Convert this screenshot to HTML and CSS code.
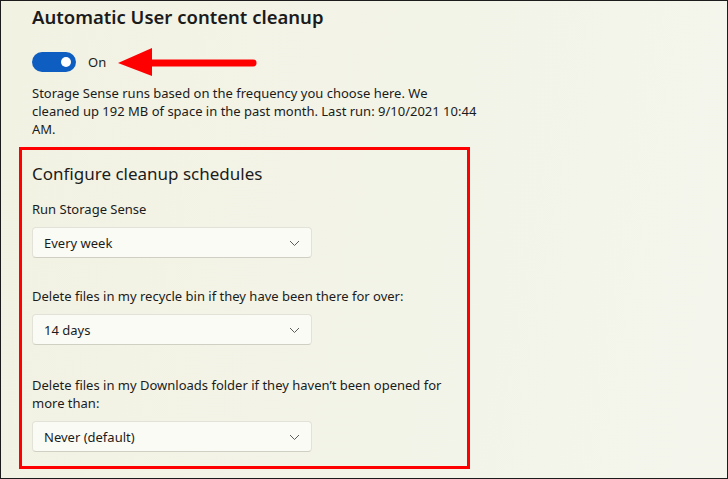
FILE: index.html
```html
<!DOCTYPE html>
<html lang="en">
<head>
<meta charset="utf-8">
<title>Storage Sense</title>
<link rel="stylesheet" href="styles.css">
</head>
<body>
<div class="frame">
  <div class="top">
    <h1 class="title">Automatic User content cleanup</h1>
    <div class="toggle-row">
      <span class="toggle"><span class="knob"></span></span>
      <span class="toggle-label">On</span>
      <svg class="arrow" width="150" height="36" viewBox="0 0 150 36">
        <line x1="36" y1="19" x2="139" y2="19" stroke="#ff0000" stroke-width="7" stroke-linecap="round"/>
        <polygon points="4,19 38,4 38,32" fill="#ff0000"/>
      </svg>
    </div>
    <p class="desc">Storage Sense runs based on the frequency you choose here. We cleaned up 192 MB of space in the past month. Last run: 9/10/2021 10:44 AM.</p>
  </div>
  <div class="box">
    <h2 class="subtitle">Configure cleanup schedules</h2>
    <div class="field first">
      <div class="label">Run Storage Sense</div>
      <div class="select"><span>Every week</span><svg class="chev" width="11" height="7" viewBox="0 0 11 7"><path d="M1 1 L5.5 5.5 L10 1" fill="none" stroke="#5c5c5c" stroke-width="1"/></svg></div>
    </div>
    <div class="field">
      <div class="label">Delete files in my recycle bin if they have been there for over:</div>
      <div class="select"><span>14 days</span><svg class="chev" width="11" height="7" viewBox="0 0 11 7"><path d="M1 1 L5.5 5.5 L10 1" fill="none" stroke="#5c5c5c" stroke-width="1"/></svg></div>
    </div>
    <div class="field last">
      <div class="label">Delete files in my Downloads folder if they haven’t been opened for more than:</div>
      <div class="select"><span>Never (default)</span><svg class="chev" width="11" height="7" viewBox="0 0 11 7"><path d="M1 1 L5.5 5.5 L10 1" fill="none" stroke="#5c5c5c" stroke-width="1"/></svg></div>
    </div>
  </div>
</div>
</body>
</html>
```
FILE: styles.css
```css
* { box-sizing: border-box; }
html, body { margin: 0; padding: 0; background: #ffffff; }
body {
  font-family: "Noto Sans", "Open Sans", sans-serif;
  color: #1b1b1b;
}
.frame {
  position: relative;
  width: 728px;
  height: 479px;
  border: 1px solid #1c1c1c;
  background: linear-gradient(100deg, #f2f2e3 0%, #f3f4e8 55%, #f4f5ec 100%);
  padding: 2px 0 0 18px;
}
.top { padding-left: 13px; }
.title {
  margin: 0;
  font-size: 18.5px;
  font-weight: 600;
  line-height: 28px;
  letter-spacing: 0;
}
.toggle-row {
  position: relative;
  display: flex;
  align-items: center;
  height: 20px;
  margin-top: 21px;
}
.toggle {
  position: relative;
  width: 44px;
  height: 20px;
  border-radius: 10px;
  background: #0e5ec2;
  flex: none;
}
.knob {
  position: absolute;
  right: 5px;
  top: 5px;
  width: 10px;
  height: 10px;
  border-radius: 50%;
  background: #ffffff;
}
.toggle-label {
  margin-left: 12px;
  font-size: 13px;
  line-height: 18px;
}
.arrow {
  position: absolute;
  left: 82px;
  top: -8px;
}
.desc {
  margin: 12px 0 0;
  width: 446px;
  font-size: 13px;
  line-height: 18px;
}
.box {
  margin-top: 9px;
  width: 451px;
  height: 322px;
  border: 3px solid #ff0000;
  padding: 10px 0 0 10px;
}
.subtitle {
  margin: 0;
  font-size: 17px;
  font-weight: 400;
  line-height: 28px;
}
.field { margin-top: 29px; }
.field.first { margin-top: 12px; }
.field.last { margin-top: 31px; }
.label {
  font-size: 13px;
  line-height: 18px;
  width: 425px;
}
.select {
  margin-top: 9px;
  width: 280px;
  height: 31px;
  background: #fbfbf5;
  border: 1px solid #e2e2d8;
  border-bottom-color: #cfcfc4;
  border-radius: 4px;
  display: flex;
  align-items: center;
  justify-content: space-between;
  padding: 0 11px 0 11px;
  font-size: 13px;
}
.chev { display: block; margin-top: 1px; }
```
